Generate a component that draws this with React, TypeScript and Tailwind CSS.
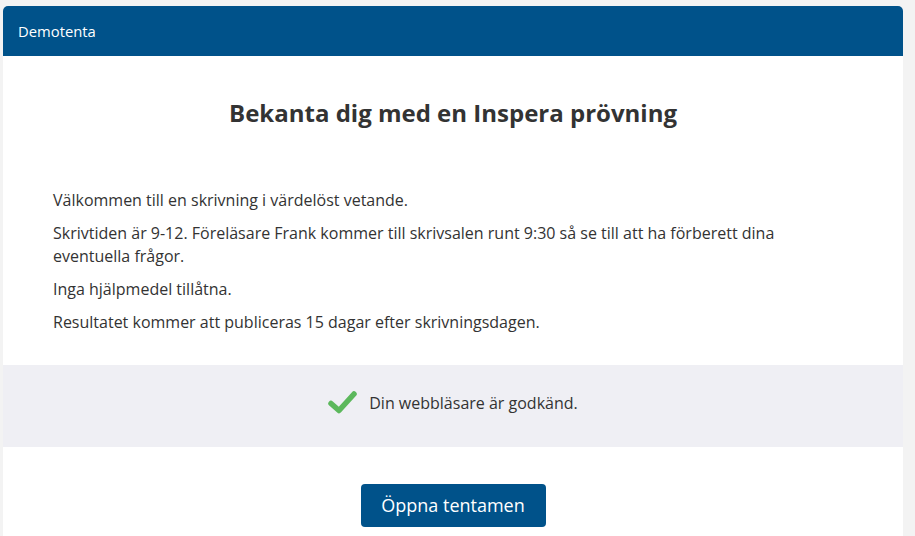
const Check = () => (
  <svg width="29" height="24" viewBox="0 0 29 24" aria-hidden="true">
    <path
      d="M3 13.5 L11 20.5 L26 4"
      fill="none"
      stroke="#5cb85c"
      strokeWidth="5.5"
      strokeLinecap="round"
      strokeLinejoin="round"
    />
  </svg>
)

const App = () => {
  return (
    <div
      className="min-h-screen bg-[#f3f3f3] pt-[6px] pl-[3px]"
      style={{ fontFamily: '"Open Sans", "Liberation Sans", sans-serif' }}
    >
      <div className="w-[900px] min-h-[530px] bg-white rounded-t-[5px] overflow-hidden">
        <div className="h-[50px] bg-[#00528a] flex items-center px-[15px] text-white text-[14.8px]">
          Demotenta
        </div>

        <h1 className="mt-[41px] text-center text-[24px] leading-[32px] font-bold text-[#333]">
          Bekanta dig med en Inspera prövning
        </h1>

        <div className="mt-[60px] pl-[50px] pr-[120px] text-[16px] leading-[23px] text-[#333] space-y-[10px]">
          <p>Välkommen till en skrivning i värdelöst vetande.</p>
          <p>
            Skrivtiden är 9-12. Föreläsare Frank kommer till skrivsalen runt
            9:30 så se till att ha förberett dina eventuella frågor.
          </p>
          <p>Inga hjälpmedel tillåtna.</p>
          <p>Resultatet kommer att publiceras 15 dagar efter skrivningsdagen.</p>
        </div>

        <div className="mt-[31px] h-[82px] bg-[#efeff4] flex items-center justify-center gap-[12px] pb-[6px] text-[16px] text-[#333]">
          <div className="-mt-[3px]">
            <Check />
          </div>
          <span>Din webbläsare är godkänd.</span>
        </div>

        <div className="mt-[37px] flex justify-center">
          <button className="w-[185px] h-[43px] bg-[#00528a] text-white text-[18px] rounded-[4px]">
            Öppna tentamen
          </button>
        </div>
      </div>
    </div>
  )
}

export default App
